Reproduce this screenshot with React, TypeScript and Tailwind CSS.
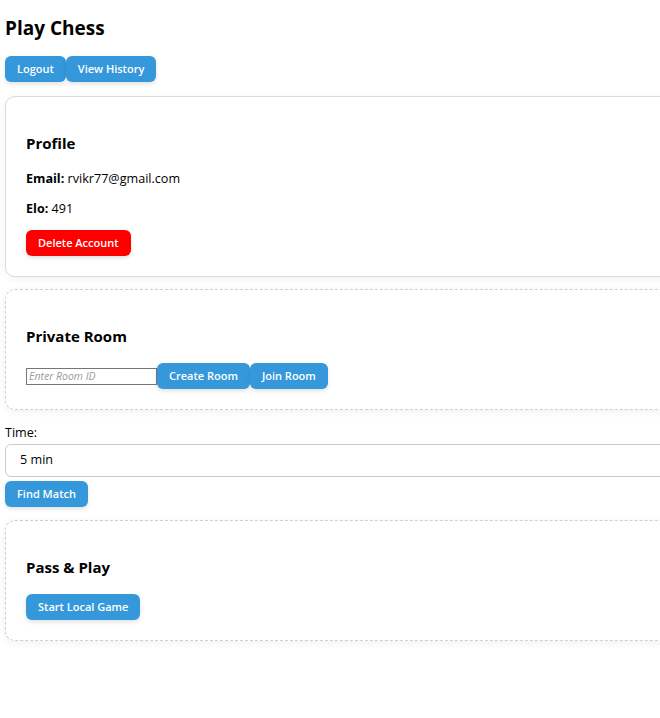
import React from "react";

function Btn({ children, red, className = "" }: { children: React.ReactNode; red?: boolean; className?: string }) {
  return (
    <button
      className={`h-[26px] rounded-[6px] px-[12px] text-[11px] font-semibold text-white shadow-[0_2px_4px_rgba(0,0,0,0.12)] ${
        red ? "bg-[#ff0000]" : "bg-[#3498db]"
      } ${className}`}
    >
      {children}
    </button>
  );
}

function Card({ title, dashed, children }: { title: string; dashed?: boolean; children: React.ReactNode }) {
  return (
    <div
      className={`rounded-[10px] border bg-white px-[20px] pt-[36px] pb-[20px] shadow-[0_2px_8px_rgba(0,0,0,0.06)] ${
        dashed ? "border-dashed border-[#cfcfcf]" : "border-[#dcdcdc]"
      }`}
    >
      <h3 className="mb-[16px] text-[15px] leading-[21px] font-bold text-black">{title}</h3>
      {children}
    </div>
  );
}

export default function App() {
  return (
    <div className="w-full overflow-hidden bg-white min-h-[718px]" style={{ fontFamily: '"Open Sans", "Noto Sans", sans-serif' }}>
      <div className="w-[720px] px-[5px] text-[12.6px] text-black">
        <h1 className="pt-[14px] text-[19px] leading-[28px] font-bold">Play Chess</h1>
        <div className="mt-[14px] flex">
          <Btn>Logout</Btn>
          <Btn>View History</Btn>
        </div>

        <div className="mt-[14px]">
          <Card title="Profile">
            <p className="leading-[17px]">
              <b>Email:</b> rvikr77@gmail.com
            </p>
            <p className="mt-[13px] leading-[17px]">
              <b>Elo:</b> 491
            </p>
            <div className="mt-[13px]">
              <Btn red>Delete Account</Btn>
            </div>
          </Card>
        </div>

        <div className="mt-[12px]">
          <Card title="Private Room" dashed>
            <div className="flex items-center">
              <input
                placeholder="Enter Room ID"
                className="h-[17px] w-[131px] border border-[#767676] px-[2px] text-[10.5px] italic placeholder:text-[#9a9a9a] outline-none"
              />
              <Btn>Create Room</Btn>
              <Btn>Join Room</Btn>
            </div>
          </Card>
        </div>

        <div className="mt-[14px] leading-[17px]">Time:</div>
        <div className="mt-[3px] flex h-[33px] items-center rounded-[6px] border border-[#cccccc] px-[14px]">5 min</div>
        <div className="mt-[4px]">
          <Btn>Find Match</Btn>
        </div>

        <div className="mt-[13px]">
          <Card title="Pass & Play" dashed>
            <Btn>Start Local Game</Btn>
          </Card>
        </div>
      </div>
    </div>
  );
}
